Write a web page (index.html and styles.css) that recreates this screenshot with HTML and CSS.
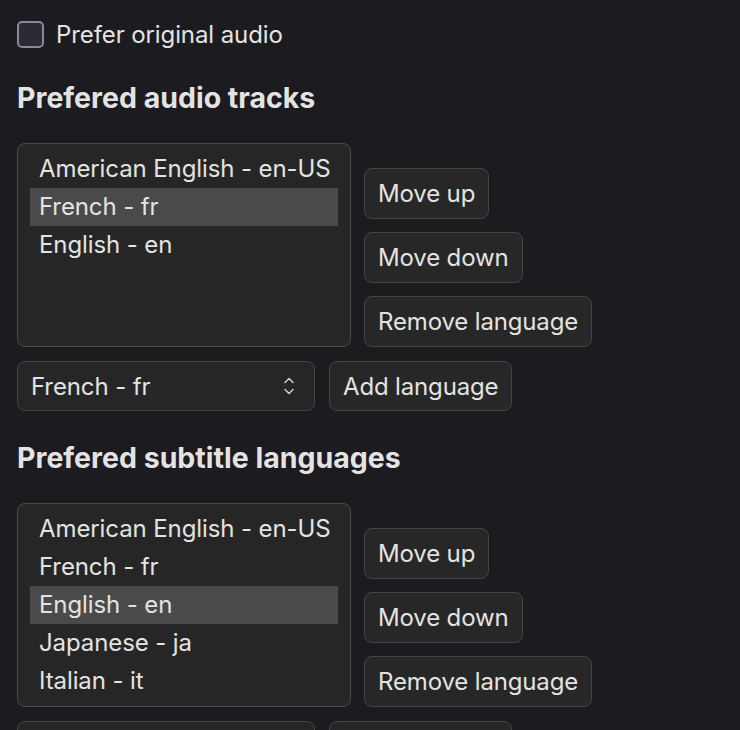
FILE: index.html
```html
<!DOCTYPE html>
<html lang="en">
<head>
    <meta charset="UTF-8">
    <meta name="viewport" content="width=device-width, initial-scale=1.0">
    <title>Language preferences</title>
    <link rel="stylesheet" href="styles.css">
</head>
<body>

    <label class="check-row">
        <span class="checkbox"></span>
        <span>Prefer original audio</span>
    </label>

    <h3>Prefered audio tracks</h3>
    <div class="list-row">
        <div class="listbox">
            <div class="option">American English - en-US</div>
            <div class="option selected">French - fr</div>
            <div class="option">English - en</div>
        </div>
        <div class="actions">
            <button>Move up</button>
            <button>Move down</button>
            <button>Remove language</button>
        </div>
    </div>
    <div class="add-row">
        <div class="dropdown">
            <span>French - fr</span>
            <svg class="chevron" width="10" height="18" viewBox="0 0 10 18" fill="none" stroke="currentColor" stroke-width="1.5" stroke-linecap="round" stroke-linejoin="round">
                <path d="M1 5.5 5 1.5l4 4"/>
                <path d="M1 12.5 5 16.5l4-4"/>
            </svg>
        </div>
        <button>Add language</button>
    </div>

    <h3>Prefered subtitle languages</h3>
    <div class="list-row">
        <div class="listbox">
            <div class="option">American English - en-US</div>
            <div class="option">French - fr</div>
            <div class="option selected">English - en</div>
            <div class="option">Japanese - ja</div>
            <div class="option">Italian - it</div>
        </div>
        <div class="actions">
            <button>Move up</button>
            <button>Move down</button>
            <button>Remove language</button>
        </div>
    </div>
    <div class="add-row">
        <div class="dropdown">
            <span>French - fr</span>
            <svg class="chevron" width="10" height="18" viewBox="0 0 10 18" fill="none" stroke="currentColor" stroke-width="1.5" stroke-linecap="round" stroke-linejoin="round">
                <path d="M1 5.5 5 1.5l4 4"/>
                <path d="M1 12.5 5 16.5l4-4"/>
            </svg>
        </div>
        <button>Add language</button>
    </div>

</body>
</html>
```

FILE: styles.css
```css
body {
    font-family: Inter, "Noto Sans", sans-serif;
    font-size: 24px;
    letter-spacing: -0.1px;
    background-color: #1c1b20;
    color: #e3e3e3;
    margin: 0;
    padding: 21px 17px;
}
.check-row {
    display: flex;
    align-items: center;
    gap: 12px;
    height: 27px;
    margin-bottom: 33px;
}
.checkbox {
    width: 23px;
    height: 23px;
    border: 2px solid #8b8a94;
    border-radius: 5px;
    background: #2b2a35;
}
h3 {
    font-size: 28.5px;
    font-weight: bold;
    letter-spacing: 0;
    margin: 30px 0 28px;
    line-height: 34px;
}
.list-row {
    display: flex;
    align-items: flex-end;
    gap: 13px;
}
.listbox {
    box-sizing: border-box;
    width: 334px;
    height: 204px;
    padding: 6px 12px;
    background: #262626;
    border: 1px solid #4a4a4a;
    border-radius: 8px;
}
.option {
    height: 38px;
    line-height: 38px;
    padding-left: 9px;
    white-space: nowrap;
}
.option.selected {
    background: #4a4a4a;
}
.actions {
    display: flex;
    flex-direction: column;
    align-items: flex-start;
    gap: 13px;
}
button {
    font-family: inherit;
    font-size: 24px;
    letter-spacing: -0.15px;
    color: #e3e3e3;
    background: #272727;
    border: 1px solid #444;
    border-radius: 8px;
    height: 51px;
    padding: 0 13px;
}
.add-row {
    display: flex;
    gap: 14px;
    margin-top: 14px;
}
.add-row button {
    height: 50px;
}
.dropdown {
    box-sizing: border-box;
    width: 298px;
    height: 50px;
    display: flex;
    align-items: center;
    justify-content: space-between;
    padding: 0 20px 0 13px;
    background: #262626;
    border: 1px solid #444;
    border-radius: 8px;
}
.chevron {
    color: #cfcfcf;
}
```
